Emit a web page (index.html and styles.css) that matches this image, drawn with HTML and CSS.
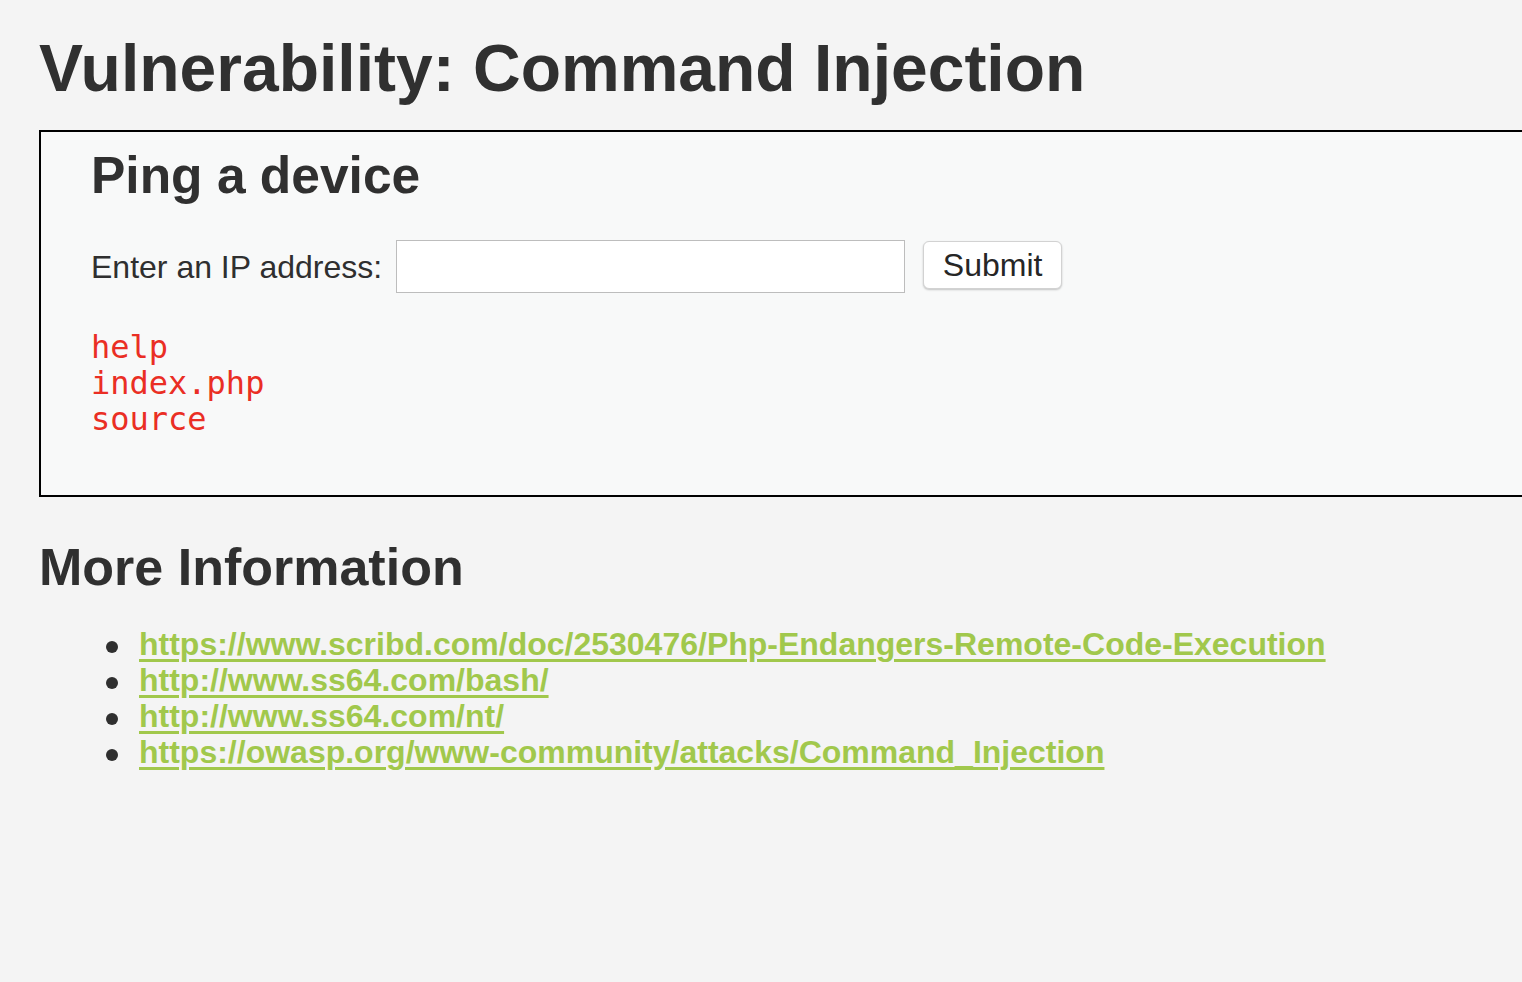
FILE: index.html
```html
<!DOCTYPE html>
<html lang="en">
<head>
<meta charset="utf-8">
<title>Vulnerability: Command Injection</title>
<link rel="stylesheet" href="styles.css">
</head>
<body>
<div class="page">
  <h1 class="title">Vulnerability: Command Injection</h1>
  <div class="vulnerable-code-area">
    <h2 class="box-title">Ping a device</h2>
    <form class="ping-form" action="#">
      <label class="ip-label" for="ip">Enter an IP address:</label>
      <input class="ip-input" id="ip" type="text" name="ip">
      <button class="submit-btn" type="button">Submit</button>
    </form>
    <pre class="output">help
index.php
source</pre>
  </div>
  <h2 class="more-title">More Information</h2>
  <ul class="links">
    <li><a href="#">https://www.scribd.com/doc/2530476/Php-Endangers-Remote-Code-Execution</a></li>
    <li><a href="#">http://www.ss64.com/bash/</a></li>
    <li><a href="#">http://www.ss64.com/nt/</a></li>
    <li><a href="#">https://owasp.org/www-community/attacks/Command_Injection</a></li>
  </ul>
</div>
</body>
</html>
```
FILE: styles.css
```css
html, body {
  margin: 0;
  padding: 0;
  background: #f4f4f4;
  overflow: hidden;
}
body {
  font-family: "Liberation Sans", Arial, Helvetica, sans-serif;
  color: #2f2f2f;
  font-size: 32px;
}
.page {
  padding-left: 39px;
  padding-top: 28px;
  height: 954px;
}
.title {
  margin: 0;
  font-size: 66px;
  line-height: 80px;
  font-weight: bold;
  color: #303030;
}
.vulnerable-code-area {
  margin-top: 22px;
  width: calc(100% + 60px);
  box-sizing: border-box;
  border: 2px solid #000;
  background: #f8f9f9;
  padding: 11px 0 58px 50px;
}
.box-title {
  margin: 0;
  font-size: 51.5px;
  line-height: 64px;
  font-weight: bold;
  color: #303030;
}
.ping-form {
  margin-top: 33px;
  display: flex;
  align-items: center;
  height: 53px;
}
.ip-label {
  font-size: 32px;
  line-height: 40px;
  color: #2f2f2f;
}
.ip-input {
  margin: 0 0 0 14px;
  width: 509px;
  height: 53px;
  box-sizing: border-box;
  border: 1px solid #bdbdbd;
  background: #fff;
  font-size: 32px;
  padding: 0 8px;
}
.submit-btn {
  margin: 0 0 4px 18px;
  height: 48px;
  width: 139px;
  box-sizing: border-box;
  border: 1px solid #d2d2d2;
  border-radius: 6px;
  background: #fff;
  box-shadow: 0 1px 2px rgba(0, 0, 0, 0.22);
  font-family: "Liberation Sans", Arial, Helvetica, sans-serif;
  font-size: 32px;
  color: #262626;
  padding: 0;
  line-height: 46px;
}
.output {
  margin: 36px 0 0 0;
  font-family: "DejaVu Sans Mono", Menlo, monospace;
  font-size: 32px;
  line-height: 36px;
  color: #ea2e24;
}
.more-title {
  margin: 40px 0 0 0;
  font-size: 52px;
  line-height: 60px;
  font-weight: bold;
  color: #303030;
}
.links {
  margin: 29px 0 0 0;
  padding-left: 100px;
  font-size: 32px;
  line-height: 36px;
  list-style: none;
}
.links li {
  color: #2f2f2f;
}
.links li::before {
  content: "";
  display: inline-block;
  width: 12px;
  height: 12px;
  border-radius: 50%;
  background: #2f2f2f;
  margin-left: -33px;
  margin-right: 21px;
  vertical-align: middle;
}
.links a {
  color: #a1c84c;
  font-weight: bold;
  text-decoration: underline;
  text-decoration-thickness: 3px;
  text-underline-offset: 4px;
}
```
